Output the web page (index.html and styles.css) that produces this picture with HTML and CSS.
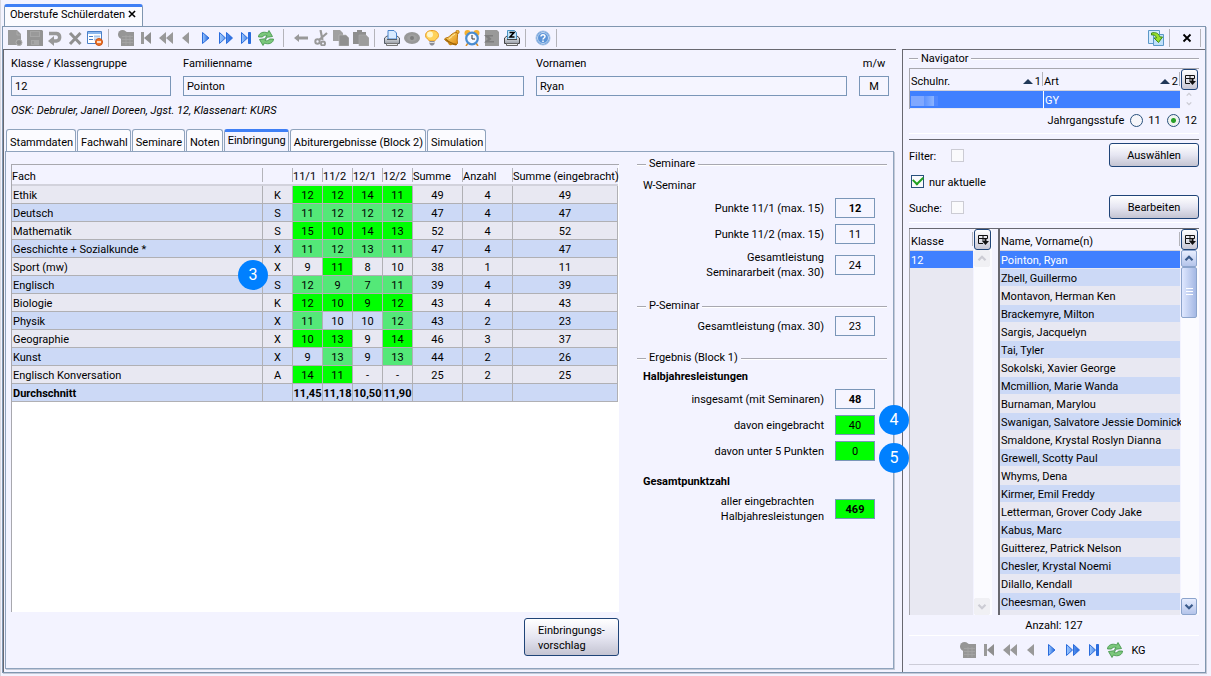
FILE: index.html
```html
<!DOCTYPE html>
<html lang="de">
<head>
<meta charset="utf-8">
<title>Oberstufe Schülerdaten</title>
<link rel="stylesheet" href="styles.css">
</head>
<body>
<svg class="sprite" aria-hidden="true">
  <defs>
    <linearGradient id="blue" x1="0" y1="0" x2="1" y2="0"><stop offset="0" stop-color="#9cc8ff"/><stop offset="1" stop-color="#1d62dc"/></linearGradient>
    <linearGradient id="gold" x1="0" y1="0" x2="1" y2="1"><stop offset="0" stop-color="#ffe27a"/><stop offset="1" stop-color="#e08a10"/></linearGradient>
    <linearGradient id="steel" x1="0" y1="0" x2="0" y2="1"><stop offset="0" stop-color="#f4f5f7"/><stop offset="1" stop-color="#9a9fa8"/></linearGradient>
    <symbol id="i-new" viewBox="0 0 16 16"><path d="M1 0h9l4 4v7a3 3 0 0 1 1 2 3 3 0 0 1-5 2H1z" fill="#999"/><path d="M10 1v4h4" fill="none" stroke="#aaa"/><circle cx="12" cy="12.500" r="3" fill="#8e8e8e" stroke="#b4b4b4"/></symbol>
    <symbol id="i-save" viewBox="0 0 16 16"><path d="M0 0h15l1 1v15H0z" fill="#949494"/><path d="M3 1h10v6H3zM4 10h8v5H4z" fill="#a6a6a6"/><path d="M4 3h8M4 5h8M6 11v3" stroke="#8c8c8c"/></symbol>
    <symbol id="i-undo" viewBox="0 0 16 16"><path d="M2 3.500h7.500a3.800 3.800 0 0 1 0 7.500H6" fill="none" stroke="#999" stroke-width="3.400"/><path d="M7 6v10L1 11z" fill="#999"/></symbol>
    <symbol id="i-delete" viewBox="0 0 16 16"><path d="M3 3l10.500 11M13.500 3L3 14" stroke="#909090" stroke-width="3"/></symbol>
    <symbol id="i-form" viewBox="0 0 16 16"><path d="M.5 1.500h14v12H.5z" fill="#fff" stroke="#4a80c8"/><path d="M1 2h13v2H1z" fill="#8cb8ee"/><path d="M2 6.500h4M2 9.500h4" stroke="#4a80c8"/><path d="M7 6.500h6M7 9.500h4" stroke="#aac8ee" stroke-width="2"/><circle cx="12" cy="12" r="3.500" fill="#ee7428" stroke="#c85010"/><path d="M10 12h4" stroke="#fff" stroke-width="1.500"/></symbol>
    <symbol id="i-table" viewBox="0 0 16 16"><circle cx="4.500" cy="4.500" r="4.500" fill="#959595"/><path d="M3 2h13v14H3z" fill="#969696"/><path d="M4 6.500h11M4 9.500h11M4 12.500h11M8 5v10M12 5v10" stroke="#a6a6a6" stroke-width=".8"/></symbol>
    <symbol id="i-first" viewBox="0 0 16 16"><path d="M3 2h3v12H3z" fill="#999"/><path d="M13 2v12L6 8z" fill="#8f8f8f"/></symbol>
    <symbol id="i-back2" viewBox="0 0 16 16"><path d="M8 2v12L1 8zM15 2v12L8 8z" fill="#999"/></symbol>
    <symbol id="i-back" viewBox="0 0 16 16"><path d="M11 2v12L4 8z" fill="#999"/></symbol>
    <symbol id="i-next" viewBox="0 0 16 16"><path d="M4.500 2.500v11L11 8z" fill="url(#blue)" stroke="#2a6cdc"/></symbol>
    <symbol id="i-next2" viewBox="0 0 16 16"><path d="M1.500 2.500v11L7.500 8zM8.500 2.500v11l6-5.500z" fill="url(#blue)" stroke="#2a6cdc"/></symbol>
    <symbol id="i-last" viewBox="0 0 16 16"><path d="M3.500 2.500v11L9.500 8zM10.500 2.500h2v11h-2z" fill="url(#blue)" stroke="#2a6cdc"/></symbol>
    <symbol id="i-refresh" viewBox="0 0 16 16"><path d="M.5 7c0-4 5-6 9-4L11 .5l3.500 6L7.500 7.500 9 5.500C7 4.800 5 5.500 4.500 7z" fill="#7cc87c" stroke="#3c9044" stroke-width=".8"/><path d="M15.500 9c0 4-5 6-9 4L5 15.500l-3.500-6 7-1L7 10.500c2 .7 4 0 4.500-1.500z" fill="#7cc87c" stroke="#3c9044" stroke-width=".8"/></symbol>
    <symbol id="i-arrow" viewBox="0 0 16 16"><path d="M1 8l5-4v2.500h9v3H6V12z" fill="#999"/></symbol>
    <symbol id="i-cut" viewBox="0 0 16 16"><path d="M7.500 0l2 10M14 3l-8 7" stroke="#999" stroke-width="2.200"/><circle cx="4.500" cy="11.500" r="2.200" fill="none" stroke="#999" stroke-width="2"/><circle cx="10" cy="13.500" r="2" fill="none" stroke="#999" stroke-width="2"/></symbol>
    <symbol id="i-copy" viewBox="0 0 16 16"><path d="M0 0h7l3 3v8H0z" fill="#a0a0a0"/><path d="M6 5h7l3 3v8H6z" fill="#909090" stroke="#b8b8b8" stroke-width=".6"/></symbol>
    <symbol id="i-paste" viewBox="0 0 16 16"><path d="M0 2h4V0h5v2h4v12H0z" fill="#8f8f8f"/><path d="M6 5h7l3 3v8H6z" fill="#9c9c9c" stroke="#b0b0b0" stroke-width=".6"/></symbol>
    <symbol id="i-print" viewBox="0 0 16 16"><path d="M.5 8l2.500-2h10l2.500 2v5.500H.5z" fill="url(#steel)" stroke="#555c66"/><path d="M4 .5h6l2.500 2.500v6h-8.500z" fill="#d8eaff" stroke="#4a84cc"/><path d="M3 9.500h10" stroke="#555c66"/><path d="M2.500 13.500h11v2h-11z" fill="#e8eaee" stroke="#777"/></symbol>
    <symbol id="i-printz" viewBox="0 0 16 16"><path d="M.5 8l2.500-2h10l2.500 2v5.500H.5z" fill="url(#steel)" stroke="#444"/><path d="M3.500.5h7l2 2v7h-9z" fill="#c4e4f8" stroke="#4a94c4"/><path d="M5.500 2.500h4.500L6 7h4.500" fill="none" stroke="#000" stroke-width="1.600"/><path d="M2.500 13.500h11v2h-11z" fill="#eee" stroke="#666"/><path d="M3 9.500h10" stroke="#444"/></symbol>
    <symbol id="i-eye" viewBox="0 0 16 16"><ellipse cx="8" cy="8" rx="8" ry="6" fill="#989898"/><ellipse cx="8" cy="8" rx="5" ry="3.500" fill="#a0a0a0"/><circle cx="8" cy="8" r="2" fill="#7d7d7d"/></symbol>
    <symbol id="i-bulb" viewBox="0 0 16 16"><path d="M8 .5c4 0 6.500 2 6.500 5S11 9.500 10.500 11h-5C5 9.500 1.500 8.500 1.500 5.500S4 .5 8 .5z" fill="#ffd35c" stroke="#e89a20"/><circle cx="6" cy="4.500" r="3" fill="#fff6c8"/><path d="M5.500 11h5v3l-1.500 1.500h-2L5.500 14z" fill="#8c8c94"/><path d="M5.500 12.500h5" stroke="#ddd"/></symbol>
    <symbol id="i-bell" viewBox="0 0 16 16"><circle cx="13.500" cy="2" r="1.700" fill="#f0b838" stroke="#b87410" stroke-width=".8"/><path d="M13 2.500c1.500 2.500-.5 6 .5 11l-1.500 1.500C8 14.500 3.500 12.500.5 9.500L1.500 8C6 8 7.500 2 13 2.500z" fill="url(#gold)" stroke="#b87410"/><path d="M1.500 9c3 3 7 5 11 5.500" fill="none" stroke="#9c6408" stroke-width="1.400"/><path d="M4.500 12a2 2 0 0 0 4 2z" fill="#c88414"/><path d="M5 8.500c3-1 3.500-3.500 6-4.500" fill="none" stroke="#fff0b0"/></symbol>
    <symbol id="i-clock" viewBox="0 0 16 16"><circle cx="3.500" cy="3" r="3" fill="#f4b030"/><circle cx="12.500" cy="3" r="3" fill="#f4b030"/><path d="M4 13l-2 3M12 13l2 3" stroke="#d89028" stroke-width="1.500"/><circle cx="8" cy="8.500" r="5.800" fill="#f4f8ff" stroke="#4a8cd0" stroke-width="2.200"/><path d="M8 5v4h3" fill="none" stroke="#333"/></symbol>
    <symbol id="i-sum" viewBox="0 0 16 16"><path d="M1 0h12l2 2v14H1z" fill="#999"/><path d="M0 5h9v1.500H5L7.500 9 5 11h5v1.500H0L4 9z" fill="#7e7e7e"/></symbol>
    <symbol id="i-help" viewBox="0 0 16 16"><circle cx="8" cy="8" r="7" fill="#5b94d8" stroke="#a9c4e6"/><circle cx="8" cy="8" r="5.500" fill="none" stroke="#dce8f8" stroke-width=".8"/><path d="M6 6.500c0-2.500 4-2.500 4 0C10 8 8 8 8 9.500M8 10.500V12" fill="none" stroke="#fff" stroke-width="1.500"/></symbol>
    <symbol id="i-export" viewBox="0 0 16 16"><path d="M.5 .5h11v13H.5z" fill="#d4ebff" stroke="#5c98c8"/><path d="M5.500 4.500h10v11h-10z" fill="#bfe0fb" stroke="#5c98c8"/><path d="M3.500 3c4-1 7 0 8.500 4h2.500L10.500 12.500 6 8h2.500C8 5.500 6 4.500 3.500 5z" fill="#9be02c" stroke="#3e8c18"/></symbol>
    <symbol id="i-close" viewBox="0 0 16 16"><path d="M4.500 4.500l7 7M11.500 4.500l-7 7" stroke="#000" stroke-width="1.800"/></symbol>
    <symbol id="i-cols" viewBox="0 0 16 16"><path d="M3.500 3.500h9v3h-9zM3.500 6.500v5H8M8 3.500V9" fill="none" stroke="#111"/><path d="M7 9h2.500V7h2v2H14l-3.500 4z" fill="#111"/></symbol>
    <symbol id="i-up" viewBox="0 0 16 16"><path d="M4 10l4-4 4 4" fill="none" stroke="currentColor" stroke-width="2.500"/></symbol>
    <symbol id="i-down" viewBox="0 0 16 16"><path d="M4 6l4 4 4-4" fill="none" stroke="currentColor" stroke-width="2.500"/></symbol>
  </defs>
</svg>

<div class="window-tabs">
  <button class="window-tab" type="button">Oberstufe Schülerdaten<svg class="tab-close"><use href="#i-close"/></svg></button>
</div>

<div class="frame">
  <div class="toolbar">
    <button class="tool" type="button" aria-label="Neu"><svg><use href="#i-new"/></svg></button>
    <button class="tool" type="button" aria-label="Speichern"><svg><use href="#i-save"/></svg></button>
    <button class="tool" type="button" aria-label="Rückgängig"><svg><use href="#i-undo"/></svg></button>
    <button class="tool" type="button" aria-label="Löschen"><svg><use href="#i-delete"/></svg></button>
    <button class="tool" type="button" aria-label="Maske"><svg><use href="#i-form"/></svg></button>
    <span class="sep"></span>
    <button class="tool" type="button" aria-label="Liste"><svg><use href="#i-table"/></svg></button>
    <button class="tool" type="button" aria-label="Erster"><svg><use href="#i-first"/></svg></button>
    <button class="tool" type="button" aria-label="Schnell zurück"><svg><use href="#i-back2"/></svg></button>
    <button class="tool" type="button" aria-label="Zurück"><svg><use href="#i-back"/></svg></button>
    <button class="tool" type="button" aria-label="Weiter"><svg><use href="#i-next"/></svg></button>
    <button class="tool" type="button" aria-label="Schnell weiter"><svg><use href="#i-next2"/></svg></button>
    <button class="tool" type="button" aria-label="Letzter"><svg><use href="#i-last"/></svg></button>
    <button class="tool" type="button" aria-label="Aktualisieren"><svg><use href="#i-refresh"/></svg></button>
    <span class="sep sep-wide"></span>
    <button class="tool" type="button" aria-label="Verschieben"><svg><use href="#i-arrow"/></svg></button>
    <button class="tool" type="button" aria-label="Ausschneiden"><svg><use href="#i-cut"/></svg></button>
    <button class="tool" type="button" aria-label="Kopieren"><svg><use href="#i-copy"/></svg></button>
    <button class="tool" type="button" aria-label="Einfügen"><svg><use href="#i-paste"/></svg></button>
    <span class="sep"></span>
    <button class="tool" type="button" aria-label="Drucken"><svg><use href="#i-print"/></svg></button>
    <button class="tool" type="button" aria-label="Vorschau"><svg><use href="#i-eye"/></svg></button>
    <button class="tool" type="button" aria-label="Hinweis"><svg><use href="#i-bulb"/></svg></button>
    <button class="tool" type="button" aria-label="Erinnerung"><svg><use href="#i-bell"/></svg></button>
    <button class="tool" type="button" aria-label="Wiedervorlage"><svg><use href="#i-clock"/></svg></button>
    <button class="tool" type="button" aria-label="Summe"><svg><use href="#i-sum"/></svg></button>
    <button class="tool" type="button" aria-label="Zeugnisdruck"><svg><use href="#i-printz"/></svg></button>
    <span class="sep"></span>
    <button class="tool" type="button" aria-label="Hilfe"><svg><use href="#i-help"/></svg></button>
    <span class="sep"></span>
    <span class="spacer"></span>
    <button class="tool" type="button" aria-label="Exportieren"><svg><use href="#i-export"/></svg></button>
    <span class="sep"></span>
    <button class="tool" type="button" aria-label="Schließen"><svg><use href="#i-close"/></svg></button>
    <span class="sep"></span>
  </div>

  <div class="body">
    <main class="main">
      <div class="student">
        <div class="field"><label for="klasse">Klasse / Klassengruppe</label><input id="klasse" value="12"></div>
        <div class="field"><label for="famname">Familienname</label><input id="famname" value="Pointon"></div>
        <div class="field"><label for="vorname">Vornamen</label><input id="vorname" value="Ryan"></div>
        <div class="field field-mw"><label for="mw">m/w</label><input id="mw" value="M"></div>
      </div>
      <p class="osk">OSK: Debruler, Janell Doreen, Jgst. 12, Klassenart: KURS</p>

      <div class="tabs">
        <button class="tab" type="button">Stammdaten</button>
        <button class="tab" type="button">Fachwahl</button>
        <button class="tab" type="button">Seminare</button>
        <button class="tab" type="button">Noten</button>
        <button class="tab tab-active" type="button">Einbringung</button>
        <button class="tab" type="button">Abiturergebnisse (Block 2)</button>
        <button class="tab" type="button">Simulation</button>
      </div>

      <div class="panel">
        <section class="grades">
          <div class="grades-box">
            <table class="grade-table">
              <colgroup><col><col class="c-mark"><col class="c-mark"><col class="c-mark"><col class="c-mark"><col class="c-mark"><col class="c-sum"><col class="c-sum"><col class="c-total"></colgroup>
              <thead><tr><th>Fach</th><th></th><th>11/1</th><th>11/2</th><th>12/1</th><th>12/2</th><th>Summe</th><th>Anzahl</th><th>Summe (eingebracht)</th></tr></thead>
              <tbody>
                <tr><td>Ethik</td><td>K</td><td class="g">12</td><td class="g">12</td><td class="g">14</td><td class="g">11</td><td>49</td><td>4</td><td>49</td></tr>
                <tr><td>Deutsch</td><td>S</td><td class="g">11</td><td class="g">12</td><td class="g">12</td><td class="g">12</td><td>47</td><td>4</td><td>47</td></tr>
                <tr><td>Mathematik</td><td>S</td><td class="g">15</td><td class="g">10</td><td class="g">14</td><td class="g">13</td><td>52</td><td>4</td><td>52</td></tr>
                <tr><td>Geschichte + Sozialkunde *</td><td>X</td><td class="g">11</td><td class="g">12</td><td class="g">13</td><td class="g">11</td><td>47</td><td>4</td><td>47</td></tr>
                <tr><td class="marked">Sport (mw)<span class="badge badge-3">3</span></td><td>X</td><td>9</td><td class="g">11</td><td>8</td><td>10</td><td>38</td><td>1</td><td>11</td></tr>
                <tr><td>Englisch</td><td>S</td><td class="g">12</td><td class="g">9</td><td class="g">7</td><td class="g">11</td><td>39</td><td>4</td><td>39</td></tr>
                <tr><td>Biologie</td><td>K</td><td class="g">12</td><td class="g">10</td><td class="g">9</td><td class="g">12</td><td>43</td><td>4</td><td>43</td></tr>
                <tr><td>Physik</td><td>X</td><td class="g">11</td><td>10</td><td>10</td><td class="g">12</td><td>43</td><td>2</td><td>23</td></tr>
                <tr><td>Geographie</td><td>X</td><td class="g">10</td><td class="g">13</td><td>9</td><td class="g">14</td><td>46</td><td>3</td><td>37</td></tr>
                <tr><td>Kunst</td><td>X</td><td>9</td><td class="g">13</td><td>9</td><td class="g">13</td><td>44</td><td>2</td><td>26</td></tr>
                <tr><td>Englisch Konversation</td><td>A</td><td class="g">14</td><td class="g">11</td><td>-</td><td>-</td><td>25</td><td>2</td><td>25</td></tr>
                <tr class="average"><td>Durchschnitt</td><td></td><td>11,45</td><td>11,18</td><td>10,50</td><td>11,90</td><td></td><td></td><td></td></tr>
              </tbody>
            </table>
          </div>
          <button class="button button-suggest" type="button">Einbringungs-<br>vorschlag</button>
        </section>

        <section class="results">
          <h2 class="legend">Seminare</h2>
          <p class="subhead subhead-w">W-Seminar</p>
          <div class="result"><label for="p1">Punkte 11/1 (max. 15)</label><input id="p1" class="strong" value="12"></div>
          <div class="result"><label for="p2">Punkte 11/2 (max. 15)</label><input id="p2" value="11"></div>
          <div class="result"><label for="sa">Gesamtleistung<br>Seminararbeit (max. 30)</label><input id="sa" value="24"></div>
          <h2 class="legend legend-p">P-Seminar</h2>
          <div class="result result-p"><label for="pl">Gesamtleistung (max. 30)</label><input id="pl" value="23"></div>
          <h2 class="legend legend-e">Ergebnis (Block 1)</h2>
          <p class="subhead strong">Halbjahresleistungen</p>
          <div class="result"><label for="ig">insgesamt (mit Seminaren)</label><input id="ig" class="strong" value="48"></div>
          <div class="result"><label for="de">davon eingebracht</label><input id="de" class="ok" value="40"><span class="badge badge-4">4</span></div>
          <div class="result"><label for="du">davon unter 5 Punkten</label><input id="du" class="ok" value="0"><span class="badge badge-5">5</span></div>
          <p class="subhead subhead-g strong">Gesamtpunktzahl</p>
          <div class="result result-total"><label for="gp">aller eingebrachten<br>Halbjahresleistungen</label><input id="gp" class="ok strong" value="469"></div>
        </section>
      </div>
    </main>

    <aside class="side">
      <h2 class="legend legend-nav">Navigator</h2>
      <div class="schools">
        <table class="list school-table">
          <thead><tr><th><span class="sorted">Schulnr.<span class="sort">1</span></span></th><th><span class="sorted">Art<span class="sort">2</span></span></th></tr></thead>
          <tbody><tr class="selected"><td><span class="masked"></span></td><td>GY</td></tr></tbody>
        </table>
        <div class="rail">
          <button class="cols" type="button" aria-label="Spalten"><svg><use href="#i-cols"/></svg></button>
          <div class="mini"><svg><use href="#i-up"/></svg><svg><use href="#i-down"/></svg></div>
        </div>
      </div>
      <div class="years">
        <span>Jahrgangsstufe</span>
        <label><input type="radio" name="jgst">11</label>
        <label><input type="radio" name="jgst" checked>12</label>
      </div>
      <div class="filters">
        <div class="filter"><label for="filter">Filter:</label><input id="filter" type="checkbox" class="dim"><button class="button" type="button">Auswählen</button></div>
        <div class="filter filter-now"><input id="aktuell" type="checkbox" checked><label for="aktuell">nur aktuelle</label></div>
        <div class="filter"><label for="suche">Suche:</label><input id="suche" type="checkbox" class="dim"><button class="button" type="button">Bearbeiten</button></div>
      </div>
      <div class="lists">
        <div class="pane pane-class">
          <table class="list">
            <thead><tr><th>Klasse</th></tr></thead>
            <tbody><tr class="selected"><td>12</td></tr></tbody>
          </table>
          <div class="rail">
            <button class="cols" type="button" aria-label="Spalten"><svg><use href="#i-cols"/></svg></button>
            <div class="scroll scroll-off"><svg><use href="#i-up"/></svg><svg class="end"><use href="#i-down"/></svg></div>
          </div>
        </div>
        <div class="pane pane-names">
          <table class="list">
            <thead><tr><th>Name, Vorname(n)</th></tr></thead>
            <tbody>
              <tr class="selected"><td>Pointon, Ryan</td></tr>
              <tr><td>Zbell, Guillermo</td></tr>
              <tr><td>Montavon, Herman Ken</td></tr>
              <tr><td>Brackemyre, Milton</td></tr>
              <tr><td>Sargis, Jacquelyn</td></tr>
              <tr><td>Tai, Tyler</td></tr>
              <tr><td>Sokolski, Xavier George</td></tr>
              <tr><td>Mcmillion, Marie Wanda</td></tr>
              <tr><td>Burnaman, Marylou</td></tr>
              <tr><td>Swanigan, Salvatore Jessie Dominick</td></tr>
              <tr><td>Smaldone, Krystal Roslyn Dianna</td></tr>
              <tr><td>Grewell, Scotty Paul</td></tr>
              <tr><td>Whyms, Dena</td></tr>
              <tr><td>Kirmer, Emil Freddy</td></tr>
              <tr><td>Letterman, Grover Cody Jake</td></tr>
              <tr><td>Kabus, Marc</td></tr>
              <tr><td>Guitterez, Patrick Nelson</td></tr>
              <tr><td>Chesler, Krystal Noemi</td></tr>
              <tr><td>Dilallo, Kendall</td></tr>
              <tr><td>Cheesman, Gwen</td></tr>
            </tbody>
          </table>
          <div class="rail">
            <button class="cols" type="button" aria-label="Spalten"><svg><use href="#i-cols"/></svg></button>
            <div class="scroll"><svg><use href="#i-up"/></svg><span class="thumb"></span><svg class="end"><use href="#i-down"/></svg></div>
          </div>
        </div>
      </div>
      <p class="count">Anzahl: 127</p>
      <div class="pager">
        <button class="tool" type="button" aria-label="Liste"><svg><use href="#i-table"/></svg></button>
        <button class="tool" type="button" aria-label="Erster"><svg><use href="#i-first"/></svg></button>
        <button class="tool" type="button" aria-label="Schnell zurück"><svg><use href="#i-back2"/></svg></button>
        <button class="tool" type="button" aria-label="Zurück"><svg><use href="#i-back"/></svg></button>
        <button class="tool" type="button" aria-label="Weiter"><svg><use href="#i-next"/></svg></button>
        <button class="tool" type="button" aria-label="Schnell weiter"><svg><use href="#i-next2"/></svg></button>
        <button class="tool" type="button" aria-label="Letzter"><svg><use href="#i-last"/></svg></button>
        <button class="tool" type="button" aria-label="Aktualisieren"><svg><use href="#i-refresh"/></svg></button>
        <span class="kg">KG</span>
      </div>
    </aside>
  </div>
</div>
</body>
</html>
```

FILE: styles.css
```css
* { box-sizing: border-box; }

body {
  margin: 0;
  min-height: 100vh;
  padding: 4px 5px 3px 1px;
  display: flex;
  flex-direction: column;
  background: #f3f3ff;
  border-left: 1px solid #d8d8e0;
  color: #000;
  font: 11px/15px Roboto, "Open Sans", sans-serif;
}

button, input { font: inherit; color: inherit; }
button { padding: 0; cursor: default; }
h2, p { margin: 0; font-size: 11px; font-weight: 400; }
.sprite { position: absolute; width: 0; height: 0; }
svg { display: block; width: 16px; height: 16px; flex: none; }
.strong { font-weight: 700; }
.spacer { flex: 1; }

.window-tabs { display: flex; padding-left: 2px; }
.window-tab {
  display: flex;
  align-items: flex-start;
  height: 22px;
  padding: 0 3px 0 5px;
  background: #fbfbff;
  border: 1px solid #8096b0;
  border-top: 3px solid #3f7ff5;
  border-bottom: 0;
  border-radius: 3px 3px 0 0;
  white-space: nowrap;
}
.tab-close { width: 14px; height: 14px; }

.frame {
  flex: 1;
  display: flex;
  flex-direction: column;
  border: 1px solid #8096b0;
  box-shadow: 1px 1px 0 #c4cad8;
}

.toolbar {
  display: flex;
  align-items: center;
  height: 22px;
  padding: 0 4px 0 2px;
}
.tool {
  display: flex;
  justify-content: center;
  width: 20px;
  background: none;
  border: 0;
}
.sep { width: 1px; height: 18px; margin: 0 7px 0 3px; background: #b4b4ba; }
.sep-wide { margin-left: 7px; }
.sep:last-child { margin-right: 0; }

.body { flex: 1; display: flex; gap: 6px; }

.main {
  flex: 1;
  min-width: 0;
  display: flex;
  flex-direction: column;
  padding: 0 2px 3px 1px;
  border: solid #686870;
  border-width: 1px 0 0 1px;
}

.student {
  display: grid;
  grid-template-columns: 160px 341fr 311fr 30px;
  gap: 12px;
  padding: 6px 5px 0 6px;
}
.field { display: flex; flex-direction: column; gap: 5px; min-width: 0; }
.field input {
  width: 100%;
  height: 20px;
  padding: 0 3px;
  background: #f5f5ff;
  border: 1px solid #7a96b8;
}
.field-mw { text-align: center; }
.field-mw input { text-align: center; }
.osk { padding: 7px 6px 0; font-style: italic; }

.tabs { display: flex; align-items: flex-end; gap: 1px; margin-top: 11px; padding-left: 1px; }
.tab {
  height: 22px;
  padding: 3px 2px 0 3px;
  background: #fbfbff;
  border: 1px solid #8fa3bd;
  border-bottom: 0;
  border-radius: 3px 3px 0 0;
  white-space: nowrap;
}
.tab-active { border-top: 3px solid #3f7ff5; padding: 0 2px 2px 3px; background: #f3f3ff; }

.panel {
  flex: 1;
  display: flex;
  gap: 18px;
  padding: 0 6px 12px 5px;
  border: 1px solid #8fa3bd;
  box-shadow: 1px 1px 0 #c4cad8;
}

.grades { flex: 1; min-width: 0; display: flex; flex-direction: column; gap: 6px; padding-top: 12px; }
.grades-box {
  flex: 1;
  padding-right: 1px;
  background: #fff;
  border: solid #a8a8ae;
  border-width: 1px 0 0 1px;
}
.grade-table { width: 100%; table-layout: fixed; border-collapse: separate; border-spacing: 0; }
.c-mark { width: 30px; }
.c-sum { width: 50px; }
.c-total { width: 105px; }
.grade-table th {
  height: 21px;
  padding: 4px 0 0;
  text-align: left;
  font-weight: 400;
  white-space: nowrap;
  background: linear-gradient(#b4b4ba, #b4b4ba) right 3px / 1px 14px no-repeat, #f3f3ff;
  border-bottom: 2px solid #d2d2dc;
}
.grade-table td {
  height: 18px;
  padding: 2px 0 0;
  text-align: center;
  border: solid #b0b0b4;
  border-width: 0 1px 1px 0;
}
.grade-table td:first-child { text-align: left; padding-left: 1px; }
.grade-table tbody tr { background: #e8e8f2; }
.grade-table tbody tr:nth-child(even) { background: #ccd9f6; }
.grade-table .g { background: #0f0; }
.grade-table tr:nth-child(even) .g { background: #54e878; }
.average { font-weight: 700; }
.marked { position: relative; }

.badge {
  position: absolute;
  width: 30px;
  height: 30px;
  border-radius: 50%;
  background: #0080ff;
  color: #fff;
  font-size: 16px;
  font-weight: 400;
  line-height: 30px;
  text-align: center;
}
.badge-3 { right: -6px; top: 2px; }
.badge-4 { right: -22px; top: -10px; }
.badge-5 { right: -22px; top: 2px; }

.button {
  height: 24px;
  padding-top: 1px;
  background: linear-gradient(#fff, #e6e6f2 50%, #c4c4d2);
  border: 1px solid #1f4478;
  border-radius: 3px;
}
.button-suggest { align-self: flex-end; width: 95px; height: 38px; padding-left: 13px; text-align: left; }

.results { width: 250px; padding-top: 4px; }
.legend { display: flex; align-items: center; gap: 3px; line-height: 16px; white-space: nowrap; }
.legend::before, .legend::after { content: ""; height: 1px; background: #a8a8b0; box-shadow: 0 1px 0 #fff; }
.legend::before { width: 9px; }
.legend::after { flex: 1; }
.legend-p { margin-top: 18px; }
.legend-e { margin-top: 14px; }
.subhead { margin-top: 2px; padding-left: 6px; line-height: 18px; }
.subhead-w { margin-top: 5px; }
.subhead-g { margin-top: 12px; }
.result {
  position: relative;
  display: flex;
  justify-content: flex-end;
  align-items: center;
  gap: 11px;
  margin-top: 6px;
  padding-right: 12px;
  text-align: right;
}
.subhead + .result { margin-top: 3px; }
.result-p { margin-top: 2px; }
.result-total { text-align: left; }
.result input {
  width: 40px;
  height: 20px;
  padding: 0;
  text-align: center;
  background: #f5f5ff;
  border: 1px solid #7a96b8;
}
.result .ok { background: #0f0; }

.side {
  width: 303px;
  display: flex;
  flex-direction: column;
  padding: 0 6px 7px;
  border: solid #686870;
  border-width: 1px 0 0 1px;
}
.legend-nav { margin-bottom: 1px; line-height: 17px; }

.list { flex: 1; align-self: flex-start; width: 100%; min-width: 0; table-layout: fixed; border-collapse: separate; border-spacing: 0; }
.list th {
  height: 22px;
  padding: 4px 0 0 1px;
  text-align: left;
  font-weight: 400;
  background: linear-gradient(#b4b4ba, #b4b4ba) right 3px / 1px 14px no-repeat, #f3f3ff;
  border-bottom: 1px solid #d2d2dc;
}
.list td { height: 18px; padding: 2px 0 0 1px; white-space: nowrap; border-bottom: 1px solid #e8e8f2; }
.list tr:nth-child(even) td { background: #ccd9f6; }
.list .selected td { background: #4080ff; color: #fff; }

.rail { width: 18px; margin-left: 1px; display: flex; flex: none; flex-direction: column; }
.cols {
  height: 21px;
  width: 17px;
  display: flex;
  align-items: center;
  justify-content: center;
  background: linear-gradient(#fff, #c8c8d6);
  border: 1px solid #1f4478;
  border-radius: 3px;
}

.schools { display: flex; border: solid #a8a8ae; border-width: 1px 0 0 1px; }
.school-table td + td { border-left: 1px solid #fff; }
.school-table th:first-child { width: 133px; }
.sorted { display: flex; justify-content: space-between; padding-right: 2px; }
.sort { display: flex; align-items: center; gap: 2px; }
.sort::before { content: ""; border: solid transparent; border-width: 0 5px 5px; border-bottom-color: #203858; }
.masked { display: block; width: 27px; height: 10px; background: linear-gradient(90deg, #80a8ff 50%, #6094ff 50%, #8cb4ff 85%, #5088ff 85%); }
.mini { flex: 1; display: flex; flex-direction: column; color: #ccccd4; }
.mini svg { height: 9px; }

.years { display: flex; justify-content: flex-end; align-items: center; gap: 6px; height: 22px; padding-right: 2px; }
.years label { display: flex; align-items: center; gap: 5px; }
.years input {
  appearance: none;
  width: 13px;
  height: 13px;
  margin: 0;
  border: 1px solid #28507c;
  border-radius: 50%;
  background: #f6f6fa;
}
.years input:checked { background: radial-gradient(circle, #28a028 2px, #f0f4f0 3px); }

.filters {
  margin-top: 2px;
  border-top: 1px solid #fff;
  border-bottom: 1px solid #fff;
  padding-bottom: 3px;
}
.filters::before { content: ""; display: block; height: 1px; margin: 5px 0 3px; background: #686870; }
.filter { display: flex; align-items: center; height: 24px; margin-bottom: 2px; }
.filter:last-child { margin-bottom: 0; }
.filter > label { padding-top: 2px; }
.filter > label:first-child { width: 42px; }
.filter .button { width: 90px; margin-left: auto; }
.filter-now { gap: 5px; padding-left: 2px; }
.filter input {
  appearance: none;
  display: grid;
  place-items: center;
  width: 13px;
  height: 13px;
  margin: 0;
  background: #fafafc;
  border: 1px solid #28507c;
}
.filter .dim { border-color: #ccccd4; }
.filter input:checked::before {
  content: "";
  width: 8px;
  height: 5px;
  margin-bottom: 3px;
  border: solid #20a020;
  border-width: 0 0 2px 2px;
  transform: rotate(-45deg);
}

.lists { flex: 1; display: flex; gap: 6px; margin-top: 5px; border-top: 1px solid #686870; }
.pane { display: flex; background: linear-gradient(90deg, #e8e8f2 calc(100% - 19px), #f3f3ff 0); }
.pane-class { flex: none; width: 83px; border-left: 1px solid #a8a8ae; }
.pane-names { flex: 1; min-width: 0; border-left: 2px solid #686870; }
.pane .rail { background: #fbfbff; }
.scroll { flex: 1; display: flex; flex-direction: column; color: #3c5c8c; }
.scroll svg { height: 17px; background: linear-gradient(#e8eeff, #b4c4ea); border: 1px solid #8ca4cc; border-radius: 2px; }
.scroll .end { margin-top: auto; }
.scroll-off { color: #ccccd4; }
.scroll-off svg { background: #f0f0f4; border-color: #f0f0f4; }
.thumb {
  width: 16px;
  height: 51px;
  border: 1px solid #8ca4cc;
  border-radius: 2px;
  background:
    repeating-linear-gradient(#fff 0 1px, transparent 1px 3px) center / 7px 9px no-repeat,
    linear-gradient(90deg, #e0e8ff, #a4b8e4);
}

.count { padding: 3px 0 2px; text-align: center; border-bottom: 1px solid #fff; }
.pager {
  display: flex;
  align-items: center;
  justify-content: center;
  gap: 1px;
  height: 29px;
  padding-right: 4px;
  border-bottom: 1px solid #ccccd8;
}
.kg { margin-left: 5px; }
```
